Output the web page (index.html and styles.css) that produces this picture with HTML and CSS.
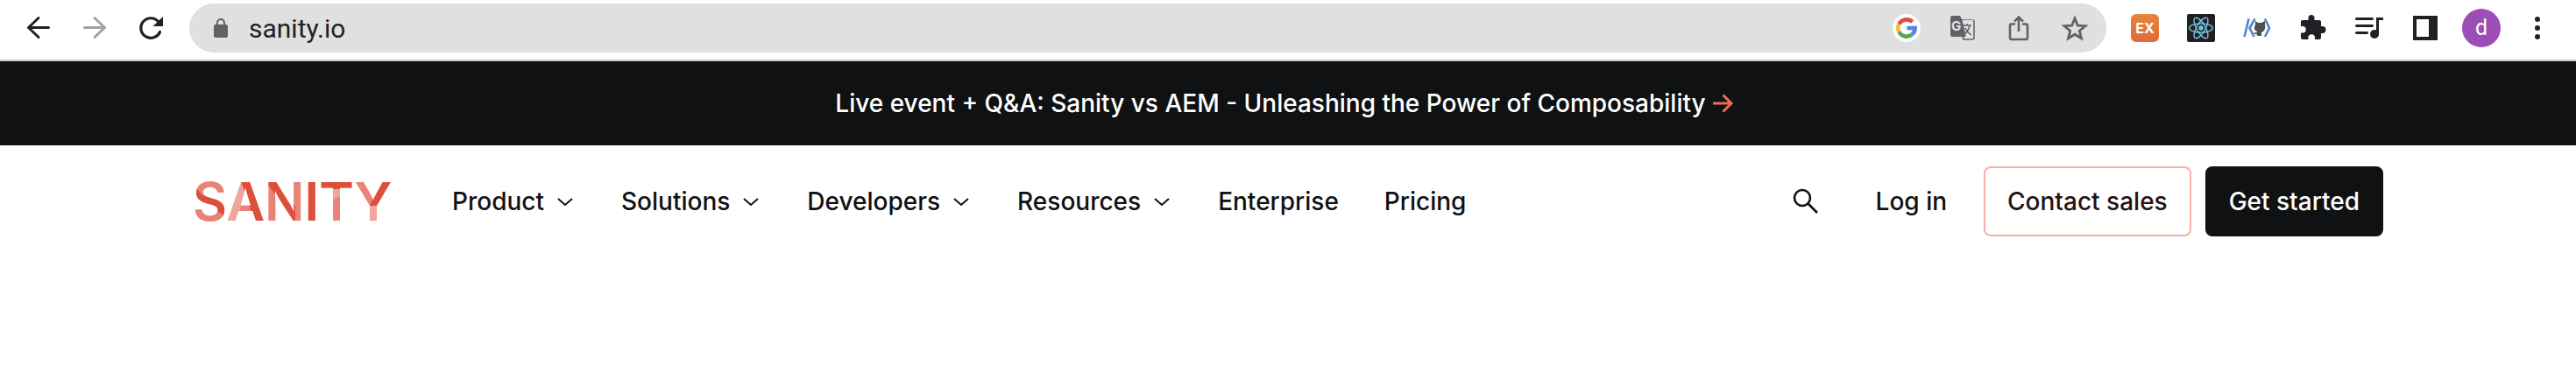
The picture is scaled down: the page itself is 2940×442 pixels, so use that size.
FILE: index.html
```html
<!DOCTYPE html>
<html lang="en">
<head>
    <meta charset="UTF-8">
    <meta name="viewport" content="width=device-width, initial-scale=1.0">
    <title>Sanity</title>
    <link rel="stylesheet" href="styles.css">
</head>
<body>
    <div class="toolbar">
        <div class="tool-group">
            <button class="tool" aria-label="Back">
                <svg width="32" height="32" viewBox="0 0 32 32" fill="none" stroke="#202124" stroke-width="3" stroke-linecap="round" stroke-linejoin="round"><path d="M27.500 15.500H4.500M16 4.500l-11.500 11 11.500 11"/></svg>
            </button>
            <button class="tool" aria-label="Forward">
                <svg width="32" height="32" viewBox="0 0 32 32" fill="none" stroke="#a1a1a1" stroke-width="3" stroke-linecap="round" stroke-linejoin="round"><path d="M4.500 15.500H27.500M16 4.500l11.500 11-11.500 11"/></svg>
            </button>
            <button class="tool" aria-label="Reload">
                <svg width="32" height="32" viewBox="0 0 32 32"><path d="M26.500 20.500A11.300 11.300 0 1 1 24.500 8.500" fill="none" stroke="#202124" stroke-width="3.200" stroke-linecap="round"/><path d="M30 3v11H18.500z" fill="#202124"/></svg>
            </button>
        </div>

        <div class="omnibox">
            <svg class="lock" width="16" height="24" viewBox="0 0 16 24"><path d="M4 10V6a4 4 0 0 1 8 0v4" fill="none" stroke="#5f6368" stroke-width="2"/><rect y="8" width="16" height="15" rx="2" fill="#5f6368"/></svg>
            <input class="url" type="text" value="sanity.io" aria-label="Address">
            <button class="tool" aria-label="Search with Google">
                <svg width="32" height="32" viewBox="0 0 32 32">
                    <circle cx="16" cy="16" r="16" fill="#fff"/>
                    <g fill="none" stroke-width="4.600">
                        <path d="M7.400 11.500A9.700 9.700 0 0 1 22.600 9" stroke="#d94f41"/>
                        <path d="M7.400 20.500a9.700 9.700 0 0 1 0-9" stroke="#f2bd42"/>
                        <path d="M22.300 23.300A9.700 9.700 0 0 1 7.400 20.500" stroke="#58a55c"/>
                        <path d="M16.400 16h9.300a9.700 9.700 0 0 1-3.400 7.300" stroke="#5383ec"/>
                    </g>
                </svg>
            </button>
            <button class="tool" aria-label="Translate this page">
                <svg width="28" height="28" viewBox="0 0 28 28">
                    <path d="M10 5h15a2 2 0 0 1 2 2v18a2 2 0 0 1-2 2H15z" fill="none" stroke="#5f6368" stroke-width="1.500"/>
                    <path d="M2 0h9l2 4 6 20h-5l3 3-4-3H2a2 2 0 0 1-2-2V2a2 2 0 0 1 2-2z" fill="#5f6368"/>
                    <path d="M14 5h12v21H18z" fill="#e0e0e0"/>
                    <path d="M15 11h9M19 9v2M22 11c-1 5-3 8-7 11M17 14c1 3 4 6 7 8" fill="none" stroke="#5f6368" stroke-width="1.500"/>
                    <text class="translate-mark" x="1" y="17">G</text>
                </svg>
            </button>
            <button class="tool" aria-label="Share this page">
                <svg width="32" height="32" viewBox="0 0 32 32" fill="none" stroke="#5f6368" stroke-width="2.600"><path d="M12 11.500H8a2 2 0 0 0-2 2V27a2 2 0 0 0 2 2h16a2 2 0 0 0 2-2V13.500a2 2 0 0 0-2-2h-4M16 20V4M11 8.500l5-5 5 5"/></svg>
            </button>
            <button class="tool" aria-label="Bookmark this page">
                <svg width="32" height="32" viewBox="0 0 32 32" fill="none" stroke="#5f6368" stroke-width="2.800"><path d="M16 5l3.300 8.100 8.700.6-6.700 5.600 2.200 8.500L16 23.200l-7.500 4.600 2.200-8.500L4 13.700l8.700-.6z"/></svg>
            </button>
        </div>

        <div class="tool-group">
            <button class="tool" aria-label="EX extension"><span class="ex-badge">EX</span></button>
            <button class="tool" aria-label="React developer tools">
                <svg width="32" height="32" viewBox="0 0 32 32">
                    <rect width="32" height="32" rx="2" fill="#202020"/>
                    <circle cx="16" cy="16" r="2.800" fill="#75c5ea"/>
                    <g fill="none" stroke="#75c5ea" stroke-width="1.400">
                        <ellipse cx="16" cy="16" rx="13.300" ry="5"/>
                        <ellipse cx="16" cy="16" rx="13.300" ry="5" transform="rotate(60 16 16)"/>
                        <ellipse cx="16" cy="16" rx="13.300" ry="5" transform="rotate(120 16 16)"/>
                    </g>
                </svg>
            </button>
            <button class="tool" aria-label="Code extension">
                <svg width="32" height="32" viewBox="0 0 32 32">
                    <path d="M6.500 5.500L1.500 26M13.500 5.500L7.500 16l5 10M25 5.500l5 10.500-5 10" fill="none" stroke="#4c86cf" stroke-width="2.600"/>
                    <path d="M14 8l3 2h4l4-2v5c1 4-1 7-4 8v4h-5v-2c-3 1-3-1-4-2 2 0 2 1 4 0v-1c-3-1-4-4-2-8z" fill="#4f4f4f"/>
                </svg>
            </button>
            <button class="tool" aria-label="Extensions">
                <svg width="32" height="32" viewBox="0 0 32 32"><path d="M4 7h6.500V4.500a3.500 3.500 0 0 1 7 0V7H23a2 2 0 0 1 2 2v5h1.500a4 4 0 0 1 0 8H25v5a2 2 0 0 1-2 2h-5v-2a3.800 3.800 0 0 0-7.600 0v2H4a2 2 0 0 1-2-2v-5.400h2a3.800 3.800 0 0 0 0-7.600H2V9a2 2 0 0 1 2-2z" fill="#202124"/></svg>
            </button>
            <button class="tool" aria-label="Media controls">
                <svg width="32" height="32" viewBox="0 0 32 32"><path d="M1.500 5.500h18M1.500 13.500h18M1.500 21.500h12M31 5.500h-5.500V23" fill="none" stroke="#202124" stroke-width="3" stroke-linecap="round"/><circle cx="22" cy="23" r="5" fill="#202124"/></svg>
            </button>
            <button class="tool" aria-label="Side panel">
                <svg width="28" height="28" viewBox="0 0 28 28"><path d="M0 0h28v28H0zM4 4v20h14V4z" fill="#202124" fill-rule="evenodd"/></svg>
            </button>
            <button class="tool" aria-label="Profile"><span class="avatar">d</span></button>
            <button class="tool" aria-label="Menu">
                <svg width="32" height="32" viewBox="0 0 32 32" fill="#202124"><circle cx="16" cy="6" r="3"/><circle cx="16" cy="16" r="3"/><circle cx="16" cy="26" r="3"/></svg>
            </button>
        </div>
    </div>

    <a class="banner" href="#">
        Live event + Q&amp;A: Sanity vs AEM - Unleashing the Power of Composability
        <svg width="24" height="24" viewBox="0 0 24 24" fill="none" stroke="#ea6c5b" stroke-width="3"><path d="M0 12h21M11.500 2.500l9.500 9.500-9.500 9.500"/></svg>
    </a>

    <header class="header">
        <a class="logo" href="#" aria-label="Sanity home">
            <svg width="232" height="72" viewBox="0 0 232 72">
                <defs>
                    <clipPath id="word"><text class="logo-text" x="0" y="58">SANITY</text></clipPath>
                </defs>
                <text class="logo-text" x="0" y="58" fill="#e88376">SANITY</text>
                <!-- folded ribbon shading -->
                <g clip-path="url(#word)">
                    <g fill="#f0a69d">
                        <path d="M36 60L54 10l7 16-13 34z"/>
                        <path d="M160 22h26l-26 12z"/>
                        <path d="M196 41h24v19h-24z"/>
                    </g>
                    <g fill="#dd4f3b">
                        <path d="M0 19l4 2 7 8 14 3 13 8-2 13-5-4-9-6-14-3-8-8z"/>
                        <path d="M54 10h12l20 50H71z"/>
                        <path d="M84 12h12l21 30v18L86 17z"/>
                        <path d="M130 10h15v50h-15z"/>
                        <path d="M146 10h36l4 12h-40z"/>
                        <path d="M216 10h16l-18 31h-12z"/>
                    </g>
                </g>
            </svg>
        </a>
        <nav class="nav">
            <button class="nav-item">Product
                <svg class="chevron" width="24" height="24" viewBox="0 0 24 24"><path d="M4 9l8 7 8-7"/></svg>
            </button>
            <button class="nav-item">Solutions
                <svg class="chevron" width="24" height="24" viewBox="0 0 24 24"><path d="M4 9l8 7 8-7"/></svg>
            </button>
            <button class="nav-item">Developers
                <svg class="chevron" width="24" height="24" viewBox="0 0 24 24"><path d="M4 9l8 7 8-7"/></svg>
            </button>
            <button class="nav-item">Resources
                <svg class="chevron" width="24" height="24" viewBox="0 0 24 24"><path d="M4 9l8 7 8-7"/></svg>
            </button>
            <a class="nav-item" href="#">Enterprise</a>
            <a class="nav-item" href="#">Pricing</a>
        </nav>
        <div class="actions">
            <button class="search" aria-label="Search">
                <svg width="32" height="32" viewBox="0 0 32 32" fill="none" stroke="#101112" stroke-width="2.600"><circle cx="12" cy="12" r="9"/><path d="M18.500 18.500L29 29"/></svg>
            </button>
            <a class="login" href="#">Log in</a>
            <a class="btn btn-outline" href="#">Contact sales</a>
            <a class="btn btn-solid" href="#">Get started</a>
        </div>
    </header>
</body>
</html>
```
FILE: styles.css
```css
* {
    box-sizing: border-box;
}
body {
    margin: 0;
    background-color: #fff;
    color: #101112;
    font-family: Inter, sans-serif;
    font-size: 28px;
    font-weight: 500;
    line-height: 40px;
}
a {
    color: inherit;
    text-decoration: none;
}
button {
    padding: 0;
    border: none;
    background: none;
    color: inherit;
    font: inherit;
    cursor: pointer;
}
svg {
    display: block;
    flex: none;
}

/* Browser toolbar */
.toolbar {
    display: flex;
    gap: 12px;
    padding: 4px 12px 8px;
    border-bottom: 2px solid #c9c9c9;
}
.tool-group {
    display: flex;
}
.tool {
    display: flex;
    align-items: center;
    justify-content: center;
    width: 64px;
    height: 56px;
}
.omnibox {
    display: flex;
    flex: 1;
    align-items: center;
    padding: 0 4px 0 28px;
    border-radius: 28px;
    background-color: #e0e0e0;
}
.url {
    flex: 1;
    min-width: 0;
    height: 40px;
    margin-left: 24px;
    padding: 0;
    border: none;
    background: none;
    color: #202124;
    font-family: Roboto, sans-serif;
    font-size: 30px;
}
.translate-mark {
    fill: #e0e0e0;
    font-size: 15px;
    font-weight: 700;
}
.ex-badge {
    width: 32px;
    height: 32px;
    border-radius: 6px;
    background: linear-gradient(#e58540, #e06a35);
    color: #fff;
    font-size: 16px;
    font-weight: 700;
    line-height: 32px;
    text-align: center;
}
.avatar {
    width: 44px;
    height: 44px;
    border-radius: 50%;
    background-color: #9c4db6;
    color: #fff;
    font-family: Roboto, sans-serif;
    font-size: 25px;
    font-weight: 400;
    line-height: 44px;
    text-align: center;
}

/* Announcement */
.banner {
    display: flex;
    align-items: center;
    justify-content: center;
    gap: 8px;
    padding: 28px 32px 28px 24px;
    background-color: #101112;
    color: #fff;
}

/* Site header */
.header {
    display: flex;
    align-items: center;
    max-width: 2548px;
    margin: 0 auto;
    padding: 24px;
}
.logo-text {
    font-size: 60px;
    font-weight: 600;
}
.nav {
    display: flex;
    gap: 52px;
    margin-left: 64px;
}
.nav-item {
    display: flex;
    align-items: center;
    gap: 12px;
}
.chevron {
    fill: none;
    stroke: #101112;
    stroke-width: 2px;
}
.actions {
    display: flex;
    align-items: center;
    margin-left: auto;
}
.search {
    margin-right: 64px;
}
.login {
    margin-right: 42px;
}
.btn {
    padding: 18px 25px;
    border: 2px solid #101112;
    border-radius: 8px;
}
.btn-outline {
    margin-right: 16px;
    border-color: #f5b0a9;
    color: #261214;
}
.btn-solid {
    background-color: #101112;
    color: #fff;
}
```
